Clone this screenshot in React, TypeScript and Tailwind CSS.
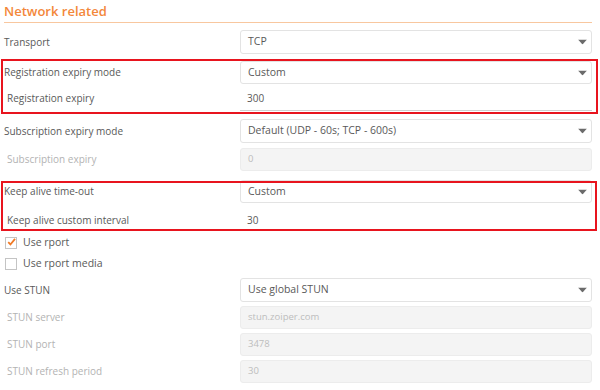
import React from "react";

const font = { fontFamily: '"Open Sans", "Noto Sans", sans-serif' };

function Arrow() {
  return (
    <svg width="9" height="5" viewBox="0 0 9 5" className="absolute right-[4px] top-1/2 -translate-y-1/2">
      <path d="M0 0 L9 0 L4.5 5 Z" fill="#6b6b6b" />
    </svg>
  );
}

function Row({
  label,
  indent,
  disabled,
  className,
  children,
}: {
  label: string;
  indent?: boolean;
  disabled?: boolean;
  className: string;
  children: React.ReactNode;
}) {
  return (
    <div className={`flex items-center ${className}`}>
      <div
        className={`w-[240px] shrink-0 text-[10px] ${indent ? "pl-[7px]" : "pl-[4px]"} ${
          disabled ? "text-[#b3b3b3]" : "text-[#595959]"
        }`}
      >
        {label}
      </div>
      <div className="h-full w-[352px]">{children}</div>
    </div>
  );
}

function Select({ value }: { value: string }) {
  return (
    <div className="relative flex h-full items-center rounded-[3px] border border-[#e3e3e3] bg-white pl-[7px] text-[10.5px] text-[#595959]">
      {value}
      <Arrow />
    </div>
  );
}

function Disabled({ value }: { value: string }) {
  return (
    <div className="flex h-full items-center rounded-[3px] border border-[#ececec] bg-[#f4f4f4] pl-[7px] text-[9.5px] text-[#bdbdbd]">
      {value}
    </div>
  );
}

function Plain({ value, underline }: { value: string; underline?: boolean }) {
  return (
    <div
      className={`flex h-full items-center pl-[7px] text-[10px] text-[#595959] ${
        underline ? "border-b border-[#cfcfcf]" : ""
      }`}
    >
      {value}
    </div>
  );
}

function Check({ label, checked, className }: { label: string; checked?: boolean; className: string }) {
  return (
    <div className={`flex items-center ${className}`}>
      <div className="ml-[5px] flex h-[12px] w-[12px] items-center justify-center border border-[#c4c4c4] bg-white">
        {checked && (
          <svg width="11" height="10" viewBox="0 0 11 10" className="-mt-[2px] ml-[1px]">
            <path d="M1.5 5.2 L4.2 8 L9.8 1.2" fill="none" stroke="#f07a26" strokeWidth="2.2" />
          </svg>
        )}
      </div>
      <span className="ml-[6px] text-[10.5px] text-[#595959]">{label}</span>
    </div>
  );
}

export default function App() {
  return (
    <div className="relative h-[390px] w-[600px] overflow-hidden bg-white" style={font}>
      <div className="ml-[4px] w-[588px] border-b border-[#f8c79f] pb-[1px] pt-[2px] text-[13px] font-semibold leading-[19px] text-[#f3873a]">
        Network related
      </div>

      <Row label="Transport" className="mt-[7px] h-[24px]">
        <Select value="TCP" />
      </Row>
      <Row label="Registration expiry mode" className="mt-[7px] h-[23px]">
        <Select value="Custom" />
      </Row>
      <Row label="Registration expiry" indent className="mt-[2px] h-[25px]">
        <Plain value="300" underline />
      </Row>
      <Row label="Subscription expiry mode" className="mt-[8px] h-[24px]">
        <Select value="Default (UDP - 60s; TCP - 600s)" />
      </Row>
      <Row label="Subscription expiry" indent disabled className="mt-[5px] h-[23px]">
        <Disabled value="0" />
      </Row>
      <Row label="Keep alive time-out" className="mt-[9px] h-[23px]">
        <Select value="Custom" />
      </Row>
      <Row label="Keep alive custom interval" indent className="mt-[4px] h-[26px]">
        <Plain value="30" />
      </Row>

      <Check label="Use rport" checked className="mt-[3px] h-[13px]" />
      <Check label="Use rport media" className="mt-[8px] h-[13px]" />

      <Row label="Use STUN" className="mt-[8px] h-[24px]">
        <Select value="Use global STUN" />
      </Row>
      <Row label="STUN server" indent disabled className="mt-[4px] h-[23px]">
        <Disabled value="stun.zoiper.com" />
      </Row>
      <Row label="STUN port" indent disabled className="mt-[4px] h-[23px]">
        <Disabled value="3478" />
      </Row>
      <Row label="STUN refresh period" indent disabled className="mt-[4px] h-[23px]">
        <Disabled value="30" />
      </Row>

      <div className="pointer-events-none absolute left-[1px] top-[59px] h-[55px] w-[597px] border-2 border-[#e8141e]" />
      <div className="pointer-events-none absolute left-[1px] top-[181px] h-[50px] w-[596px] border-2 border-[#e8141e]" />
    </div>
  );
}
